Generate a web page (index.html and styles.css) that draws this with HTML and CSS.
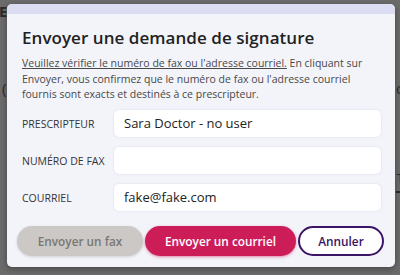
FILE: index.html
```html
<!DOCTYPE html>
<html lang="fr">
<head>
<meta charset="utf-8">
<link rel="stylesheet" href="styles.css">
</head>
<body>
<div class="page">
  <div class="bg-head">E</div>
  <div class="bg-row"><span>(</span><span>o</span></div>
  <div class="bg-row bg-t"><span></span><span>T</span></div>
  <div class="bg-line"></div>
</div>
<div class="modal">
  <div class="modal-top"></div>
  <div class="modal-body">
    <h1 class="title">Envoyer une demande de signature</h1>
    <p class="intro"><u>Veuillez vérifier le numéro de fax ou l'adresse courriel.</u> En cliquant sur Envoyer, vous confirmez que le numéro de fax ou l'adresse courriel fournis sont exacts et destinés à ce prescripteur.</p>
    <div class="form">
      <label class="label">PRESCRIPTEUR</label>
      <div class="input">Sara Doctor - no user</div>
      <label class="label">NUMÉRO DE FAX</label>
      <div class="input"></div>
      <label class="label">COURRIEL</label>
      <div class="input">fake@fake.com</div>
    </div>
    <div class="actions">
      <button class="btn btn-fax">Envoyer un fax</button>
      <button class="btn btn-mail">Envoyer un courriel</button>
      <button class="btn btn-cancel">Annuler</button>
    </div>
  </div>
</div>
</body>
</html>
```
FILE: styles.css
```css
html, body {
  margin: 0;
  padding: 0;
}
body {
  width: 400px;
  height: 275px;
  overflow: hidden;
  background: #6b6b6b;
  font-family: "Open Sans", "Noto Sans", sans-serif;
  position: relative;
}
.page {
  color: #2a2a2a;
}
.bg-head {
  font-size: 15px;
  font-weight: 700;
  line-height: 16px;
  padding-top: 3px;
  margin-left: -1px;
}
.bg-row {
  display: flex;
  justify-content: space-between;
  font-size: 15px;
  line-height: 18px;
  margin-top: 60px;
  padding: 0 0 0 2px;
  margin-right: -5px;
}
.bg-t {
  margin-top: 72px;
  font-size: 13px;
  margin-right: -4px;
}
.bg-line {
  margin: 4px 0 0 396px;
  height: 2px;
  background: #2a2a2a;
}
.modal {
  position: absolute;
  left: 7px;
  top: 4px;
  width: 388px;
  height: 263px;
  background: #f3f4fa;
  border-radius: 5px;
  overflow: hidden;
  box-shadow: 0 2px 6px rgba(0,0,0,0.35);
}
.modal-top {
  height: 10px;
  background: #dcdcf2;
}
.modal-body {
  padding: 0 11px 0 15px;
}
.title {
  margin: 13px 0 0;
  font-size: 17px;
  font-weight: 600;
  color: #222;
  line-height: 22px;
  letter-spacing: 0.05px;
}
.intro {
  margin: 7px 0 0;
  font-size: 10.5px;
  line-height: 15.5px;
  color: #484848;
}
.intro u {
  text-underline-offset: 1px;
}
.form {
  display: grid;
  grid-template-columns: 92px 1fr;
  row-gap: 10px;
  align-items: center;
  margin-top: 7px;
}
.label {
  font-size: 10.5px;
  color: #333;
  padding-top: 1px;
}
.input {
  height: 27px;
  background: #fff;
  border-radius: 5px;
  box-shadow: 0 0 2px rgba(120,120,170,0.25);
  font-size: 13px;
  line-height: 27px;
  padding: 0 10px;
  color: #222;
  margin-right: 3px;
}
.actions {
  display: flex;
  gap: 2px;
  margin-top: 15px;
  margin-left: -5px;
}
.btn {
  height: 30px;
  border-radius: 15px;
  font-family: "Open Sans", "Noto Sans", sans-serif;
  font-size: 11.8px;
  font-weight: 600;
  border: none;
  padding: 0;
}
.btn-fax {
  width: 126px;
  background: #cbc8c5;
  color: #7a7775;
  box-shadow: 0 1px 3px rgba(0,0,0,0.15);
}
.btn-mail {
  width: 151px;
  background: #cd1d59;
  color: #fff;
  box-shadow: 0 1px 3px rgba(205,29,89,0.5);
}
.btn-cancel {
  width: 86px;
  background: #fff;
  color: #3a1466;
  border: 2px solid #3a1466;
}
```
